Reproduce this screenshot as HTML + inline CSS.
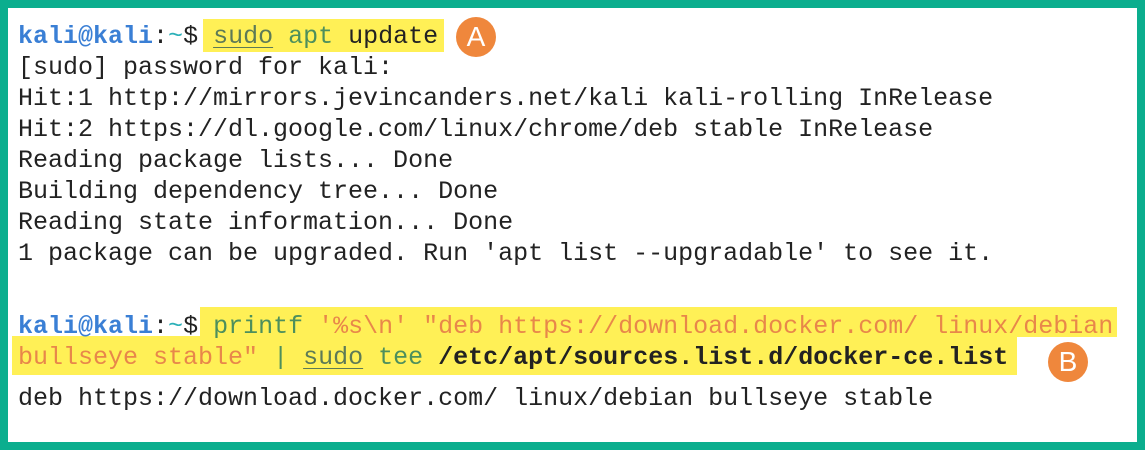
<html><head><style>
body{margin:0;width:1145px;height:450px;background:#0bae8e;position:relative;overflow:hidden}
.w{position:absolute;left:8px;top:8px;width:1129px;height:434px;background:#fff}
.l{position:absolute;left:18px;font:25px/31px "Liberation Mono","DejaVu Sans Mono",monospace;color:#222;white-space:pre}
.k{color:#3a7fd5;font-weight:bold}.t{color:#2bb0b8}
.s{color:#5d7a56;text-decoration:underline;text-decoration-thickness:1px;text-underline-offset:4px}
.g{color:#4d8f5c}.o{color:#e8874a}.b{font-weight:bold}
.hl{position:absolute;background:#fff056}
.c{position:absolute;width:40px;height:40px;border-radius:50%;background:#ef873c;color:#fff;font:28px/40px "Liberation Sans",sans-serif;text-align:center}
</style></head><body><div class="w"></div>
<div class="hl" style="left:203px;top:19px;width:241px;height:33px"></div>
<div class="hl" style="left:200px;top:307px;width:917px;height:30px"></div>
<div class="hl" style="left:12px;top:336px;width:1005px;height:39px"></div>
<div class="c" style="left:456px;top:17px">A</div>
<div class="c" style="left:1048px;top:342px">B</div>
<div class="l" style="top:21px"><span class="k">kali@kali</span>:<span class="t">~</span>$ <span class="s">sudo</span> <span class="g">apt</span> update</div>
<div class="l" style="top:52px">[sudo] password for kali:</div>
<div class="l" style="top:83px">Hit:1 http://mirrors.jevincanders.net/kali kali-rolling InRelease</div>
<div class="l" style="top:114px">Hit:2 https://dl.google.com/linux/chrome/deb stable InRelease</div>
<div class="l" style="top:145px">Reading package lists... Done</div>
<div class="l" style="top:176px">Building dependency tree... Done</div>
<div class="l" style="top:207px">Reading state information... Done</div>
<div class="l" style="top:238px">1 package can be upgraded. Run 'apt list --upgradable' to see it.</div>
<div class="l" style="top:311px"><span class="k">kali@kali</span>:<span class="t">~</span>$ <span class="g">printf</span> <span class="o">'%s\n' "deb https://download.docker.com/ linux/debian</span></div>
<div class="l" style="top:342px"><span class="o">bullseye stable"</span> <span class="g">|</span> <span class="s">sudo</span> <span class="g">tee</span> <span class="b">/etc/apt/sources.list.d/docker-ce.list</span></div>
<div class="l" style="top:383px">deb https://download.docker.com/ linux/debian bullseye stable</div>
</body></html>
